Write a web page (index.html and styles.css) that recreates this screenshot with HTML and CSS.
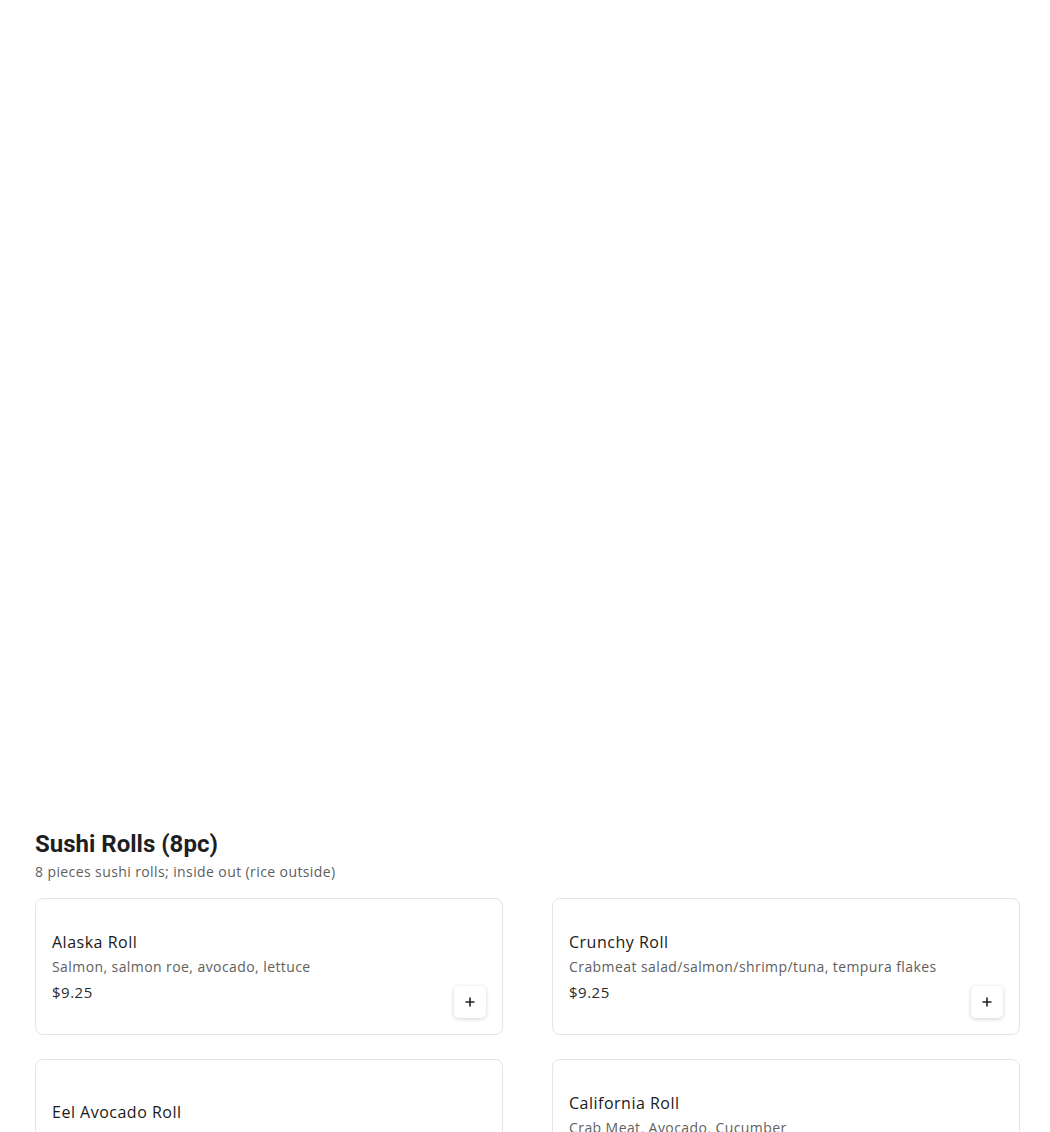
FILE: index.html
```html
<!DOCTYPE html>
<html lang="en">
<head>
    <meta charset="UTF-8">
    <meta name="viewport" content="width=device-width, initial-scale=1.0">
    <title>Menu</title>
    <link rel="stylesheet" href="styles.css">
</head>
<body>
    <div class="hero"></div>

    <section class="menu-section">
        <h2 class="section-title">Sushi Rolls (8pc)</h2>
        <p class="section-desc">8 pieces sushi rolls; inside out (rice outside)</p>

        <div class="item-grid">
            <div class="item-card">
                <div class="item-info">
                    <div class="item-name">Alaska Roll</div>
                    <div class="item-desc">Salmon, salmon roe, avocado, lettuce</div>
                    <div class="item-price">$9.25</div>
                </div>
                <button class="add-button" aria-label="Add">
                    <svg width="12" height="12" viewBox="0 0 12 12"><path d="M6 1.5v9M1.5 6h9" stroke="#222" stroke-width="1.6"/></svg>
                </button>
            </div>
            <div class="item-card">
                <div class="item-info">
                    <div class="item-name">Crunchy Roll</div>
                    <div class="item-desc">Crabmeat salad/salmon/shrimp/tuna, tempura flakes</div>
                    <div class="item-price">$9.25</div>
                </div>
                <button class="add-button" aria-label="Add">
                    <svg width="12" height="12" viewBox="0 0 12 12"><path d="M6 1.5v9M1.5 6h9" stroke="#222" stroke-width="1.6"/></svg>
                </button>
            </div>
            <div class="item-card">
                <div class="item-info">
                    <div class="item-name">Eel Avocado Roll</div>
                    <div class="item-desc"></div>
                    <div class="item-price">$9.95</div>
                </div>
                <button class="add-button" aria-label="Add">
                    <svg width="12" height="12" viewBox="0 0 12 12"><path d="M6 1.5v9M1.5 6h9" stroke="#222" stroke-width="1.6"/></svg>
                </button>
            </div>
            <div class="item-card">
                <div class="item-info">
                    <div class="item-name">California Roll</div>
                    <div class="item-desc">Crab Meat, Avocado, Cucumber</div>
                    <div class="item-price">$7.95</div>
                </div>
                <button class="add-button" aria-label="Add">
                    <svg width="12" height="12" viewBox="0 0 12 12"><path d="M6 1.5v9M1.5 6h9" stroke="#222" stroke-width="1.6"/></svg>
                </button>
            </div>
        </div>
    </section>
</body>
</html>
```

FILE: styles.css
```css
* {
    margin: 0;
    padding: 0;
    box-sizing: border-box;
}

body {
    font-family: 'Open Sans', 'Liberation Sans', sans-serif;
    background-color: #ffffff;
    color: #1f1f1f;
}

.hero {
    height: 829px;
}

.menu-section {
    padding: 0 30px 40px 35px;
}

.section-title {
    font-family: Roboto, 'Liberation Sans', sans-serif;
    font-size: 24px;
    font-weight: 700;
    line-height: 30px;
    color: #1f1f1f;
}

.section-desc {
    font-size: 14px;
    letter-spacing: 0.4px;
    line-height: 26px;
    color: #606060;
    margin-bottom: 13px;
}

.item-grid {
    display: grid;
    grid-template-columns: 1fr 1fr;
    column-gap: 49px;
    row-gap: 24px;
}

.item-card {
    display: flex;
    min-height: 137px;
    padding: 16px;
    border: 1px solid #e4e4e4;
    border-radius: 8px;
    background: #ffffff;
}

.item-info {
    flex: 1;
    align-self: center;
    display: flex;
    flex-direction: column;
}

.item-name {
    font-size: 16px;
    font-weight: 500;
    letter-spacing: 0.5px;
    line-height: 24px;
    color: #1a1a1a;
}

.item-desc {
    font-size: 14px;
    letter-spacing: 0.42px;
    line-height: 18px;
    margin: 4px 0;
    color: #606060;
}

.item-price {
    font-size: 15px;
    letter-spacing: 0.5px;
    line-height: 24px;
    color: #2a2a2a;
}

.add-button {
    align-self: flex-end;
    width: 32px;
    height: 32px;
    border: none;
    border-radius: 5px;
    background: #ffffff;
    box-shadow: 0 1px 4px rgba(0, 0, 0, 0.18);
    display: flex;
    align-items: center;
    justify-content: center;
    cursor: pointer;
}
```
